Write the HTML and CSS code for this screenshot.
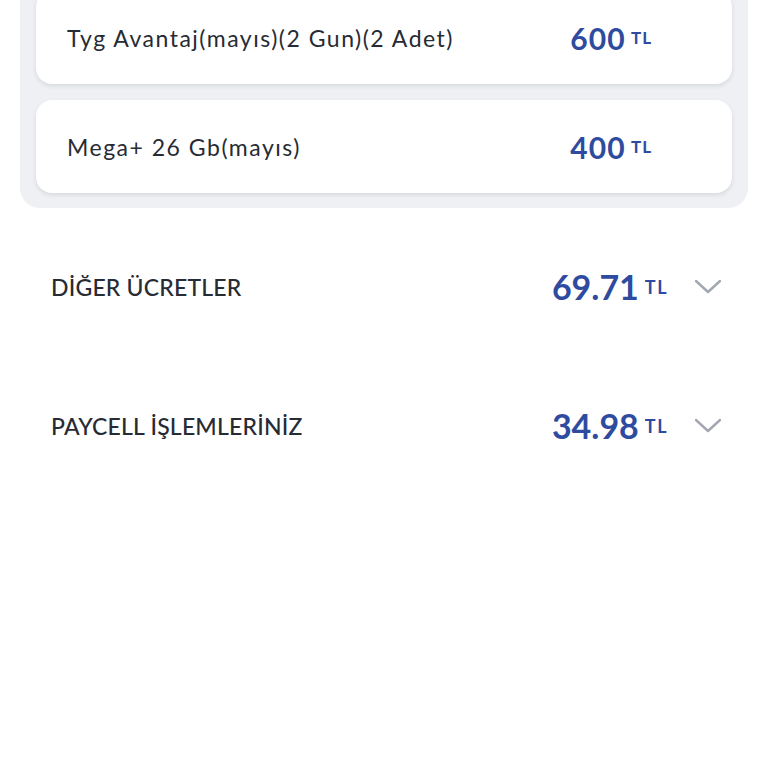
FILE: index.html
```html
<!DOCTYPE html>
<html lang="tr">
<head>
  <meta charset="UTF-8">
  <meta name="viewport" content="width=device-width, initial-scale=1.0">
  <title>Fatura Detayı</title>
  <link rel="stylesheet" href="styles.css">
</head>
<body>

<div class="package-box">
  <div class="package-card">
    <div class="package-name">Tyg Avantaj(mayıs)(2 Gun)(2 Adet)</div>
    <div class="package-price">600<span class="cur">TL</span></div>
  </div>
  <div class="package-card">
    <div class="package-name">Mega+ 26 Gb(mayıs)</div>
    <div class="package-price">400<span class="cur">TL</span></div>
  </div>
</div>

<div class="fee-list">
  <div class="fee-row">
    <div class="fee-title">DİĞER ÜCRETLER</div>
    <div class="fee-amount">69.71<span class="cur">TL</span></div>
    <svg class="chevron" viewBox="0 0 28 16" width="28" height="16">
      <path d="M2 2 L14 13 L26 2" fill="none" stroke="#a3a7b1" stroke-width="2.4" stroke-linecap="round" stroke-linejoin="round"/>
    </svg>
  </div>
  <div class="fee-row">
    <div class="fee-title">PAYCELL İŞLEMLERİNİZ</div>
    <div class="fee-amount">34.98<span class="cur">TL</span></div>
    <svg class="chevron" viewBox="0 0 28 16" width="28" height="16">
      <path d="M2 2 L14 13 L26 2" fill="none" stroke="#a3a7b1" stroke-width="2.4" stroke-linecap="round" stroke-linejoin="round"/>
    </svg>
  </div>
</div>

</body>
</html>
```

FILE: styles.css
```css
body {
  margin: 0;
  background: #fff;
  font-family: Lato, 'Noto Sans', sans-serif;
  color: #272b34;
}

.package-box {
  background: #eef0f3;
  margin: -25px 20px 0;
  padding: 16px 16px 15px;
  border-radius: 0 0 20px 20px;
  display: flex;
  flex-direction: column;
  gap: 16px;
}

.package-card {
  background: #fff;
  border-radius: 16px;
  height: 93px;
  padding: 0 80px 0 31px;
  display: flex;
  align-items: center;
  justify-content: space-between;
  box-shadow: 0 2px 4px rgba(40, 50, 70, 0.12);
}

.package-name {
  font-size: 23px;
  letter-spacing: 1.5px;
}

.package-price {
  font-size: 30px;
  font-weight: 700;
  letter-spacing: 1.2px;
  color: #2e4b9f;
  display: flex;
  align-items: center;
}

.cur {
  font-size: 17px;
  font-weight: 700;
  letter-spacing: 1px;
  margin-left: 5px;
}

.fee-list {
  padding: 9px 46px 0 51px;
}

.fee-row {
  height: 139px;
  display: flex;
  align-items: center;
}

.fee-title {
  flex: 1;
  font-size: 23px;
  font-weight: 500;
  letter-spacing: 0.2px;
}

.fee-amount {
  font-size: 34px;
  font-weight: 700;
  color: #2e4b9f;
  display: flex;
  align-items: center;
}

.fee-amount .cur {
  font-size: 18px;
  letter-spacing: 1.5px;
  margin-left: 6px;
}

.chevron {
  margin-left: 26px;
}
```
